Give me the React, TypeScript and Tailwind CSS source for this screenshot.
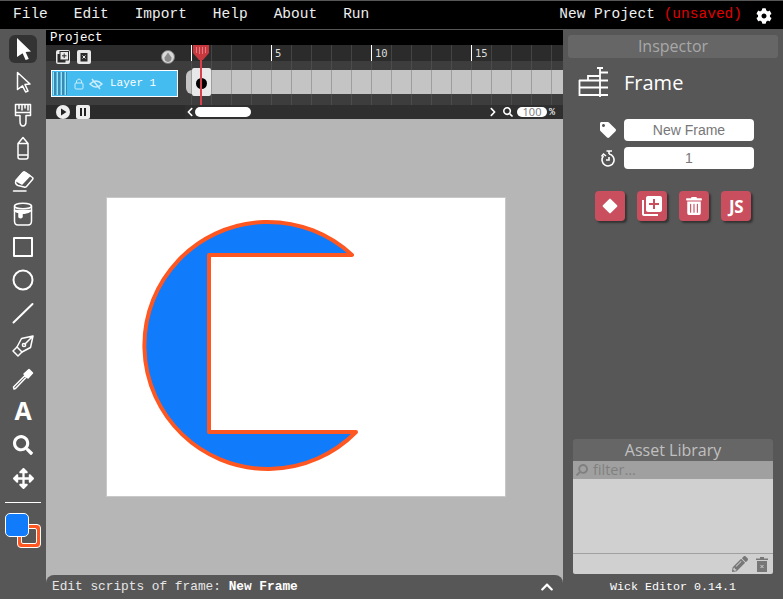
import React from "react";
import { FaCog, FaTag, FaTrashAlt, FaPencilAlt, FaSearch, FaArrowsAlt, FaChevronUp, FaChevronLeft, FaChevronRight } from "react-icons/fa";
import { MdLibraryAdd } from "react-icons/md";

const mono = "font-['Liberation_Mono',monospace]";
const open = "font-['Open_Sans',sans-serif]";

const Stroke: React.FC<{ children: React.ReactNode; w?: number; h?: number; sw?: number }> = ({ children, w = 24, h = 24, sw = 1.5 }) => (
  <svg width={w} height={h} viewBox="0 0 24 24" fill="none" stroke="#fff" strokeWidth={sw} strokeLinejoin="round" strokeLinecap="round">
    {children}
  </svg>
);

const tools: React.ReactNode[] = [
  <svg width="24" height="24" viewBox="0 0 24 24" fill="#fff"><path d="M6 1 L20 14.5 L14.6 15 L17.8 22 L14.6 23 L11.6 16.2 L6 20 Z" /></svg>,
  <Stroke><path d="M6.5 2.5 L19 14 L14 14.6 L17 21 L14.6 22 L11.5 15.8 L6.5 19.5 Z" /></Stroke>,
  <Stroke><path d="M4.5 1.5 H19.5 V12.5 H15 V18 Q15 23 12 23 Q9 23 9 18 V12.5 H4.5 Z M4.5 9.5 H19.5" /><path d="M8 2 V5.5 M11 2 V7 M14 2 V5 M17 2 V7" /></Stroke>,
  <Stroke><path d="M7 21 V7.5 L12 1.5 L17 7.5 V21 Q17 23 15 23 H9 Q7 23 7 21 Z M7 7.5 H17 M7 19 H17" /></Stroke>,
  <Stroke><path d="M2.5 22 H15" /><path d="M5 11.5 L12 3.5 Q13 2.5 14.5 3.5 L21.5 8.5 Q22.5 9.5 21.5 10.5 L15.5 17.5 Q14.5 18.5 13 18 L7 16.5 Q3.5 15 5 11.5 Z" /><path fill="#fff" d="M5 11.5 L12 3.5 Q13 2.5 14.5 3.5 L19 6.5 L11 15 Z" /></Stroke>,
  <Stroke><ellipse cx="12" cy="4" rx="8.5" ry="2.8" /><path d="M3.5 4 V19 Q3.5 23 7 23 H17 Q20.5 23 20.5 19 V4" /><path d="M3.5 8.5 Q6 11 8 10 V15 Q9.5 16.5 11 15 V11 Q16 12 20.5 8.5 Z" fill="#fff" /></Stroke>,
  <Stroke sw={2}><rect x="3" y="3" width="18" height="18" /></Stroke>,
  <Stroke sw={2}><circle cx="12" cy="12" r="9.5" /></Stroke>,
  <Stroke sw={2}><path d="M2.5 21.5 L21.5 3" /></Stroke>,
  <Stroke><path d="M22 2 L10.5 4.5 L6 13 L11 18 L19.5 13.5 Z M22 2 L14 10" /><circle cx="13" cy="11" r="1.6" /><path d="M6 13 L2 17 L7 22 L11 18" /></Stroke>,
  <Stroke><path d="M3 22 L2.5 20 L14 8.5 L15.5 10 L4.5 21.5 Z" /><path fill="#fff" d="M13 7 L18 2.5 L21.5 6 L17 11 Z" /></Stroke>,
  <span className="text-[25px] leading-none font-bold text-white font-['Open_Sans',sans-serif] -mt-[3px]">A</span>,
  <FaSearch className="text-white" size={20} />,
  <FaArrowsAlt className="text-white" size={21} />,
];

const Toolbar = () => (
  <div className="w-[46px] shrink-0 flex flex-col items-center pt-[2.5px]">
    {tools.map((icon, i) => (
      <div
        key={i}
        className={`w-7 h-7 my-[2.5px] flex items-center justify-center rounded-md ${i === 0 ? "bg-[#333333]" : ""}`}
      >
        {icon}
      </div>
    ))}
    <div className="w-9 h-px bg-white mt-[7px]" />
    <div className="relative w-9 h-9 mt-[10px]">
      <div className="absolute left-[12px] top-[11px] w-6 h-6 rounded-[4px] bg-[#ff5722] border border-white">
        <div className="w-[16px] h-[16px] m-[3px] rounded-[2px] bg-[#575757] border border-white" />
      </div>
      <div className="absolute left-0 top-0 w-6 h-6 rounded-[5px] bg-[#107cfb] border border-white" />
    </div>
  </div>
);

const cells = Array.from({ length: 19 }, (_, i) => i);

const Timeline = () => (
  <div className="h-[89px] shrink-0 bg-[#3d3d3d] flex flex-col">
    <div className={`${mono} h-[15px] bg-black text-white text-[12.5px] leading-[17px] pl-1`}>Project</div>
    <div className="relative flex-1 flex flex-col overflow-hidden">
      <div className="h-4 flex bg-[#2b2b2b]">
        <div className="relative w-[145px] shrink-0">
          <svg className="absolute left-[10px] top-[5px]" width="14" height="14" viewBox="0 0 14 14"><rect width="14" height="14" rx="2" fill="#e8e8e8" /><rect x="1.5" y="4" width="8" height="8.5" fill="#2b2b2b" /><rect x="4" y="1.5" width="8.5" height="8.5" fill="#e8e8e8" stroke="#2b2b2b" /><path d="M8.2 3.5 V8 M6 5.8 H10.5" stroke="#2b2b2b" /></svg>
          <svg className="absolute left-[31px] top-[5px]" width="14" height="14" viewBox="0 0 14 14"><rect width="14" height="14" rx="2" fill="#e8e8e8" /><rect x="3.5" y="3" width="7" height="8.5" fill="#2b2b2b" /><path d="M5.5 5.5 L8.5 8.5 M8.5 5.5 L5.5 8.5" stroke="#e8e8e8" /></svg>
          <svg className="absolute left-[115px] top-[5px]" width="14" height="14" viewBox="0 0 14 14"><circle cx="7" cy="7" r="6.5" fill="#d8d8d8" stroke="#777" /><path d="M7 2.5 L10.5 7.5 A3.6 3.6 0 1 1 3.5 7.5 Z" fill="#8a8a8a" /></svg>
        </div>
        <div className="flex shrink-0">
          {cells.map((i) => (
            <div key={i} className={`font-['DejaVu_Sans_Mono',monospace] w-5 h-4 shrink-0 border-l text-[10.5px] leading-4 text-[#ddd] pl-[3px] ${i % 5 === 4 || i === 0 ? "border-white" : "border-[#444]"}`}>
              {i % 5 === 4 ? i + 1 : ""}
            </div>
          ))}
        </div>
      </div>
      <div className="h-11 flex bg-[#3d3d3d]">
        <div className="w-[140px] pl-[5px] pt-[9px] shrink-0">
          <div className={`${mono} w-[127px] h-[27px] bg-[#45bcf0] border border-white text-white text-[11px] flex items-center`}>
            <div className="ml-[1px] w-[14px] h-[23px] bg-[repeating-linear-gradient(90deg,#a8dff6_0,#a8dff6_1px,#3a89af_1px,#3a89af_3px,#45bcf0_3px,#45bcf0_4px)]" />
            <svg className="ml-[7px]" width="10" height="12" viewBox="0 0 10 12" fill="none" stroke="#cdeefc"><rect x="1" y="5" width="8" height="6" rx="1" /><path d="M2.5 5 V3 Q5 -1 7.5 3 V5" /></svg>
            <svg className="ml-[5px]" width="14" height="12" viewBox="0 0 14 12" fill="none" stroke="#cdeefc" strokeWidth="1.4"><path d="M1 6 Q7 0 13 6 Q7 12 1 6 Z M3 1 L11 11" /></svg>
            <span className="ml-[7px]">Layer 1</span>
          </div>
        </div>
        <div className="relative flex-1 pt-[9px]">
          <div className="absolute left-[5px] right-0 inset-y-0 bg-[repeating-linear-gradient(90deg,#4c4c4c_0,#4c4c4c_1px,transparent_1px,transparent_20px)]" />
          <div className="relative h-6 w-[377px] bg-[#c4c4c4] rounded-l-[6px] flex overflow-hidden">
            <div className="w-[5px] shrink-0" />
            {cells.map((i) => (
              <div key={i} className="w-5 h-6 shrink-0 border-l border-[#9e9e9e]" />
            ))}
          </div>
          <div className="absolute left-[6px] top-[7px] w-[19px] h-7 bg-[#e8e8e8] rounded-[2px] flex items-center justify-center pt-[2px]">
            <div className="w-[11px] h-[11px] rounded-full bg-black" />
          </div>
        </div>
      </div>
      <div className="absolute left-[154px] top-0 w-[2px] h-[60px] bg-[#d9404c]" />
      <svg className="absolute left-[147px] top-0" width="16" height="16" viewBox="0 0 16 16"><path d="M0 0 H16 V8 L10 15 H6 L0 8 Z" fill="#c8383f" /><path d="M3.5 2 V8 M6.5 2 V9 M9.5 2 V9 M12.5 2 V8" stroke="#e27b7f" /></svg>
      <div className="h-[14px] bg-[#2f2f2f] flex items-center">
        <div className="w-[139px] shrink-0 h-full flex items-center pl-[10px] gap-[6px] bg-[#2b2b2b]">
          <svg width="14" height="14" viewBox="0 0 14 14"><circle cx="7" cy="7" r="7" fill="#eee" /><path d="M5 3.5 L10.5 7 L5 10.5 Z" fill="#222" /></svg>
          <svg width="14" height="14" viewBox="0 0 14 14"><rect width="14" height="14" rx="2" fill="#eee" /><rect x="4" y="3" width="2" height="8" fill="#222" /><rect x="8" y="3" width="2" height="8" fill="#222" /></svg>
        </div>
        <FaChevronLeft className="text-white shrink-0" size={10} />
        <div className="ml-0 w-14 h-[10px] shrink-0 rounded-full bg-white" />
        <div className="w-[237px] shrink-0" />
        <FaChevronRight className="text-white shrink-0" size={10} />
        <FaSearch className="text-white ml-[5px] shrink-0" size={10} />
        <div className={`${open} ml-[4px] w-[30px] h-[10px] shrink-0 rounded-full bg-white text-[11px] leading-[10px] text-[#777] text-center`}>100</div>
        <span className={`${mono} ml-[2px] text-[10px] text-white`}>%</span>
      </div>
    </div>
  </div>
);

const Stage = () => (
  <div className="flex-1 bg-[#b6b6b6] flex items-center justify-center min-h-0">
    <div className="ml-[3px] w-[400px] h-[300px] bg-white border border-[#c8c8c8] shrink-0">
      <svg width="398" height="298" viewBox="107 198 398 298" className="block overflow-visible">
        <path
          d="M352 255 L209 255 L209 432 L356 432 A123.5 123.5 0 1 1 352 255 Z"
          fill="#107cfb"
          stroke="#ff5722"
          strokeWidth="4"
          strokeLinejoin="round"
        />
      </svg>
    </div>
  </div>
);

const ScriptBar = () => (
  <div className="relative h-6 shrink-0 bg-[#b6b6b6]">
    <div className={`${mono} h-6 bg-[#575757] rounded-t-lg flex items-center pl-[6px] pr-[9px] text-[12.8px] text-[#e6e6e6]`}>
      <span>Edit scripts of frame:&nbsp;</span>
      <span className="font-bold text-white">New Frame</span>
      <FaChevronUp className="ml-auto text-white" size={14} />
    </div>
  </div>
);

const FrameIcon = () => (
  <svg width="30" height="30" viewBox="0 0 30 30" fill="none" stroke="#fff" strokeWidth="1.8">
    <path d="M22 0 V30 M19 1 H25 M22 5.5 H30 M1 13.5 H30 M1 20.5 H30 M1 28 H30 M1.5 13 V29" />
    <path d="M10 13 V9 H22" />
  </svg>
);

const actions: React.ReactNode[] = [
  <svg width="18" height="18" viewBox="0 0 18 18"><rect x="3.5" y="3.5" width="11" height="11" rx="1" fill="#fff" transform="rotate(45 9 9)" /></svg>,
  <MdLibraryAdd className="text-white" size={24} />,
  <FaTrashAlt className="text-white" size={18} />,
  <span className={`${open} text-white font-bold text-[17px] leading-none tracking-[-0.5px]`}>JS</span>,
];

const Field: React.FC<{ icon: React.ReactNode; value: string }> = ({ icon, value }) => (
  <div className="flex items-center h-[22px]">
    <div className="w-[20px] flex justify-center">{icon}</div>
    <div className="ml-[6px] w-[130px] h-[22px] bg-white rounded-[4px] text-center text-[14px] leading-[23px] text-[#777] font-['Liberation_Sans',sans-serif]">
      {value}
    </div>
  </div>
);

const Inspector = () => (
  <div className="w-[220px] shrink-0 flex flex-col pt-[5px]">
    <div className="mx-[5px] h-[23px] bg-[#666666] rounded-[3px] text-center text-[#a8a8a8] text-[16px] leading-[23px] font-['Open_Sans',sans-serif]">
      Inspector
    </div>
    <div className="flex items-center h-[30px] mt-[9px] pl-[15px]">
      <FrameIcon />
      <span className="ml-[16px] mt-[2px] text-white text-[20px] font-['Open_Sans',sans-serif]">Frame</span>
    </div>
    <div className="mt-[22px] pl-[35px] flex flex-col gap-[6px]">
      <Field icon={<FaTag className="text-white" size={16} />} value="New Frame" />
      <Field
        icon={
          <svg width="17" height="17" viewBox="0 0 17 17" fill="none" stroke="#fff" strokeWidth="1.6">
            <path d="M3.5 6 A6 6 0 1 0 9 4" />
            <path d="M1.5 6.5 L3.5 4 L6 6" />
            <path d="M6.5 1 H12 M9 1 V4 M9 7 V10 H6" />
          </svg>
        }
        value="1"
      />
    </div>
    <div className="mt-[22px] pl-[32px] flex gap-3">
      {actions.map((a, i) => (
        <div key={i} className="w-[30px] h-[30px] rounded-[4px] bg-[#c94f5f] shadow-[2px_2px_2px_#333] flex items-center justify-center">
          {a}
        </div>
      ))}
    </div>
    <div className="flex-1" />
    <div className="mx-[10px] flex flex-col h-[135px]">
      <div className="h-[22px] bg-[#666666] rounded-t-[3px] text-center text-[#c0c0c0] text-[16px] leading-[22px] font-['Open_Sans',sans-serif]">
        Asset Library
      </div>
      <div className="h-[18px] bg-[#a0a0a0] flex items-center pl-[3px] text-[#808080] text-[14.5px] font-['Open_Sans',sans-serif]">
        <FaSearch className="-scale-x-100 text-[#808080]" size={12} />
        <span className="ml-[5px]">filter...</span>
      </div>
      <div className="flex-1 bg-[#d0d0d0]" />
      <div className="h-[21px] bg-[#d0d0d0] border-t border-[#a0a0a0] rounded-b-[2px] flex items-center justify-end pr-[5px] gap-[8px]">
        <FaPencilAlt className="text-[#777]" size={16} />
        <svg width="12" height="15" viewBox="0 0 12 15"><path d="M0 1.5 H4 V0 H8 V1.5 H12 V3 H0 Z M1 4 H11 V15 H1 Z" fill="#777" /><path d="M4.5 8 L7.5 11 M7.5 8 L4.5 11" stroke="#d0d0d0" /></svg>
      </div>
    </div>
    <div className={`${mono} h-[25px] text-center text-[11.7px] leading-[27px] text-white`}>Wick Editor 0.14.1</div>
  </div>
);

const MenuBar = () => (
  <div className={`${mono} h-[30px] shrink-0 bg-black border-t border-[#575757] border-b flex items-center text-[14.5px] text-[#eee]`}>
    <div className="flex ml-[13px] gap-[26px]">
      {["File", "Edit", "Import", "Help", "About", "Run"].map((m) => (
        <span key={m}>{m}</span>
      ))}
    </div>
    <div className="ml-auto mr-[41px]">
      New Project <span className="text-[#e00000]">(unsaved)</span>
    </div>
    <FaCog className="absolute left-[756px] top-[8px] text-white" size={16} />
  </div>
);

export default function App() {
  return (
    <div className="relative w-[783px] h-[599px] bg-[#575757] overflow-hidden flex flex-col">
      <MenuBar />
      <div className="flex-1 flex min-h-0">
        <Toolbar />
        <div className="flex-1 flex flex-col min-w-0">
          <Timeline />
          <Stage />
          <ScriptBar />
        </div>
        <Inspector />
      </div>
    </div>
  );
}
